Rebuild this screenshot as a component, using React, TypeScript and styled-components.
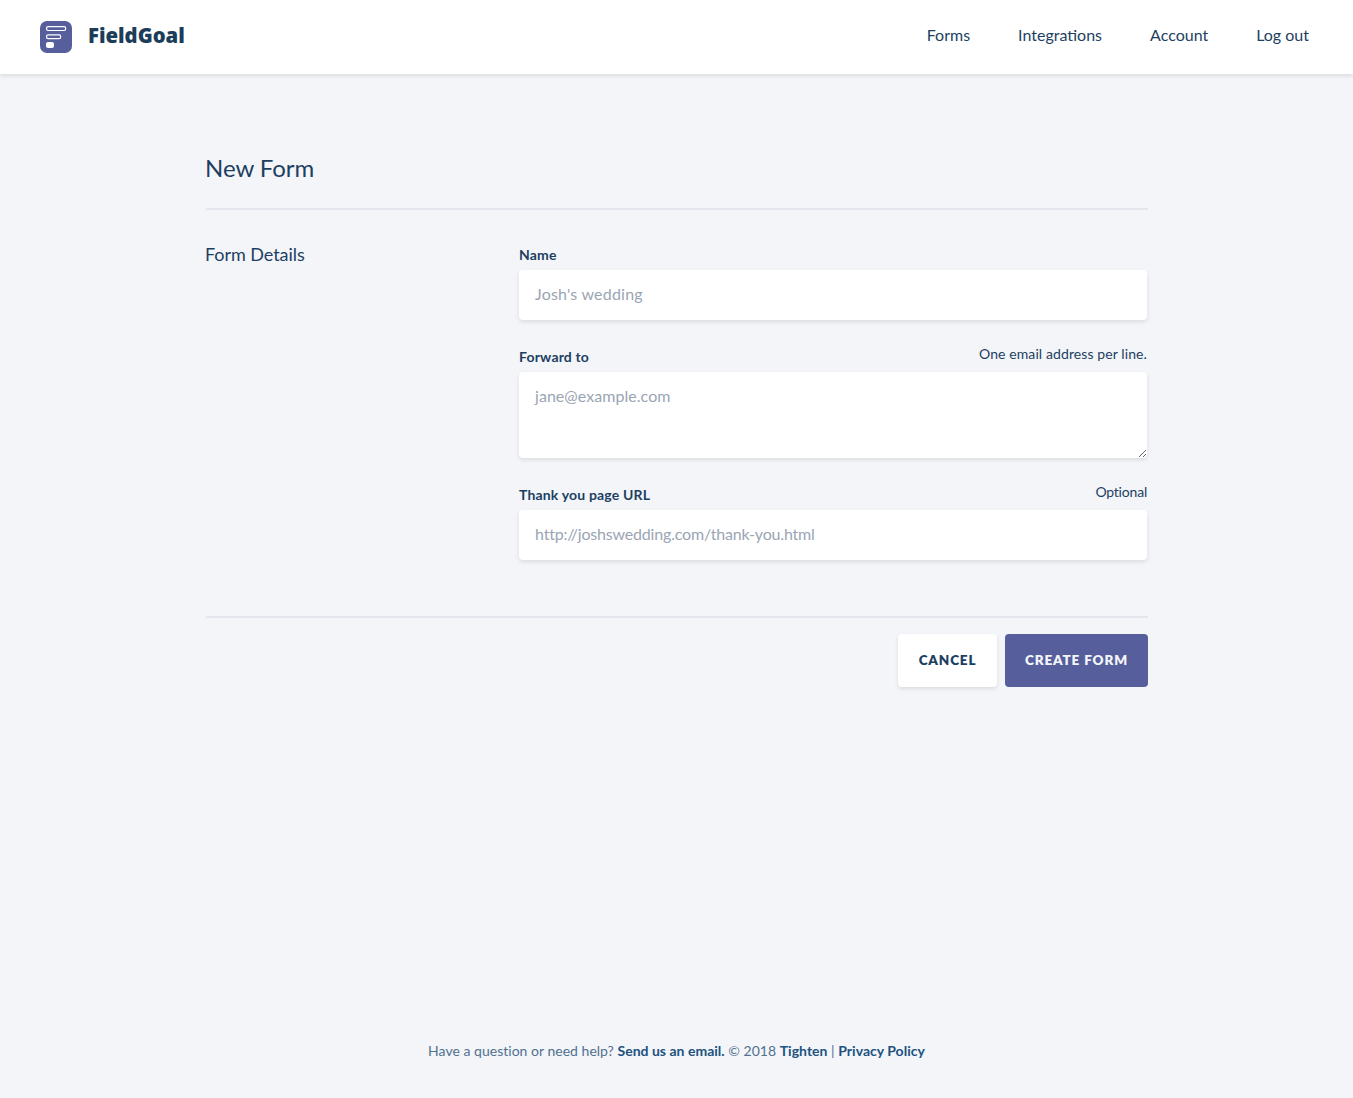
import React from "react";
import styled, { createGlobalStyle } from "styled-components";

const Global = createGlobalStyle`
  html, body { margin: 0; padding: 0; }
  body { background: #f3f5f9; font-family: Lato, "Open Sans", sans-serif; color: #1d3f62; }
  * { box-sizing: border-box; }
`;
const Page = styled.div`
  min-height: 1098px;
  display: flex;
  flex-direction: column;
`;
const Header = styled.header`
  height: 74px;
  background: #fff;
  box-shadow: 0 2px 4px rgba(0,0,0,0.1);
  display: flex;
  align-items: center;
  justify-content: space-between;
  padding: 0 44px 0 40px;
`;
const Brand = styled.div`
  display: flex;
  align-items: center;
  gap: 16px;
`;
const BrandName = styled.span`
  font-family: "Noto Sans", sans-serif;
  font-weight: 900;
  font-size: 20.3px;
  line-height: 28px;
  margin-bottom: 4px;
  color: #1c3d5a;
`;
const Nav = styled.nav`
  display: flex;
  gap: 48px;
  margin-bottom: 6px;
`;
const NavLink = styled.a`
  font-size: 16px;
  color: #1d3f62;
  text-decoration: none;
`;
const Main = styled.main`
  width: 942px;
  margin-left: 206px;
  flex: 1;
`;
const Title = styled.h1`
  margin: 0;
  height: 136px;
  padding-top: 79px;
  border-bottom: 2px solid #e4e6ee;
  font-size: 24px;
  line-height: 30px;
  font-weight: 400;
  letter-spacing: -0.05px;
  text-indent: -1px;
  color: #1d3f62;
`;
const Section = styled.section`
  display: flex;
  padding-top: 35px;
  height: 408px;
  border-bottom: 2px solid #e4e6ee;
`;
const SectionName = styled.h2`
  margin: 0;
  width: 313px;
  font-size: 18px;
  line-height: 18px;
  font-weight: 400;
  letter-spacing: -0.05px;
  text-indent: -1px;
  color: #1d3f62;
`;
const Fields = styled.div`
  width: 628px;
  display: flex;
  flex-direction: column;
`;
const Field = styled.div<{ $mb: number }>`
  margin-bottom: ${(p) => p.$mb}px;
`;
const LabelRow = styled.div`
  display: flex;
  justify-content: space-between;
  height: 25px;
`;
const Label = styled.label`
  font-size: 14px;
  line-height: 20px;
  font-weight: 700;
  letter-spacing: 0.17px;
  color: #1d3f62;
`;
const Hint = styled.span<{ $tracking: number }>`
  font-size: 14px;
  line-height: 14px;
  letter-spacing: ${(p) => p.$tracking}px;
  color: #1d3f62;
`;
const fieldStyle = `
  display: block;
  width: 100%;
  border: 0;
  outline: 0;
  background: #fff;
  border-radius: 4px;
  box-shadow: 0 2px 4px rgba(0,0,0,0.1);
  font-family: Lato, "Open Sans", sans-serif;
  font-size: 16px;
  color: #1d3f62;
  &::placeholder { color: #9aa5b4; opacity: 1; }
`;
const Input = styled.input<{ $tracking: number }>`
  ${fieldStyle}
  height: 50px;
  padding: 0 16px 4px;
  letter-spacing: ${(p) => p.$tracking}px;
`;
const TextArea = styled.textarea`
  ${fieldStyle}
  height: 86px;
  padding: 14px 16px;
  line-height: 20px;
  letter-spacing: 0.05px;
  resize: vertical;
`;
const Actions = styled.div`
  display: flex;
  justify-content: flex-end;
  gap: 8px;
  padding-top: 16px;
`;
const Button = styled.button<{ $primary?: boolean }>`
  height: 53px;
  width: ${(p) => (p.$primary ? 143 : 99)}px;
  border: 0;
  border-radius: 4px;
  background: ${(p) => (p.$primary ? "#565f9c" : "#fff")};
  color: ${(p) => (p.$primary ? "#f3f5f9" : "#1d3f62")};
  box-shadow: ${(p) => (p.$primary ? "none" : "0 2px 4px rgba(0,0,0,0.1)")};
  font-family: Lato, "Open Sans", sans-serif;
  font-weight: 800;
  font-size: 13.5px;
  letter-spacing: 0.85px;
  padding: 0 0 2px;
`;
const Footer = styled.footer`
  height: 57px;
  text-align: center;
  font-size: 14px;
  line-height: 20px;
  letter-spacing: 0.02px;
  color: #52718f;
`;
const FootLink = styled.a`
  color: #20527f;
  font-weight: 700;
  text-decoration: none;
`;

const Logo = () => (
  <svg width="32" height="32" viewBox="0 0 32 32">
    <rect width="32" height="32" rx="7" fill="#565f9c" />
    <rect x="6.6" y="5.6" width="19" height="3.9" rx="1.4" fill="none" stroke="#fff" strokeWidth="1.2" />
    <rect x="6.6" y="13.8" width="14" height="3.9" rx="1.4" fill="none" stroke="#fff" strokeWidth="1.2" />
    <rect x="6" y="21" width="8" height="6" rx="2" fill="#fff" />
  </svg>
);

export default function App() {
  return (
    <Page>
      <Global />
      <Header>
        <Brand>
          <Logo />
          <BrandName>FieldGoal</BrandName>
        </Brand>
        <Nav>
          <NavLink>Forms</NavLink>
          <NavLink>Integrations</NavLink>
          <NavLink>Account</NavLink>
          <NavLink>Log out</NavLink>
        </Nav>
      </Header>
      <Main>
        <Title>New Form</Title>
        <Section>
          <SectionName>Form Details</SectionName>
          <Fields>
            <Field $mb={27}>
              <LabelRow><Label>Name</Label></LabelRow>
              <Input $tracking={0.2} placeholder="Josh's wedding" />
            </Field>
            <Field $mb={27}>
              <LabelRow><Label>Forward to</Label><Hint $tracking={0.1}>One email address per line.</Hint></LabelRow>
              <TextArea placeholder="jane@example.com" />
            </Field>
            <Field $mb={0}>
              <LabelRow><Label>Thank you page URL</Label><Hint $tracking={-0.2}>Optional</Hint></LabelRow>
              <Input $tracking={-0.19} placeholder="http://joshswedding.com/thank-you.html" />
            </Field>
          </Fields>
        </Section>
        <Actions>
          <Button>CANCEL</Button>
          <Button $primary>CREATE FORM</Button>
        </Actions>
      </Main>
      <Footer>
        Have a question or need help? <FootLink>Send us an email.</FootLink> © 2018 <FootLink>Tighten</FootLink> | <FootLink>Privacy Policy</FootLink>
      </Footer>
    </Page>
  );
}
